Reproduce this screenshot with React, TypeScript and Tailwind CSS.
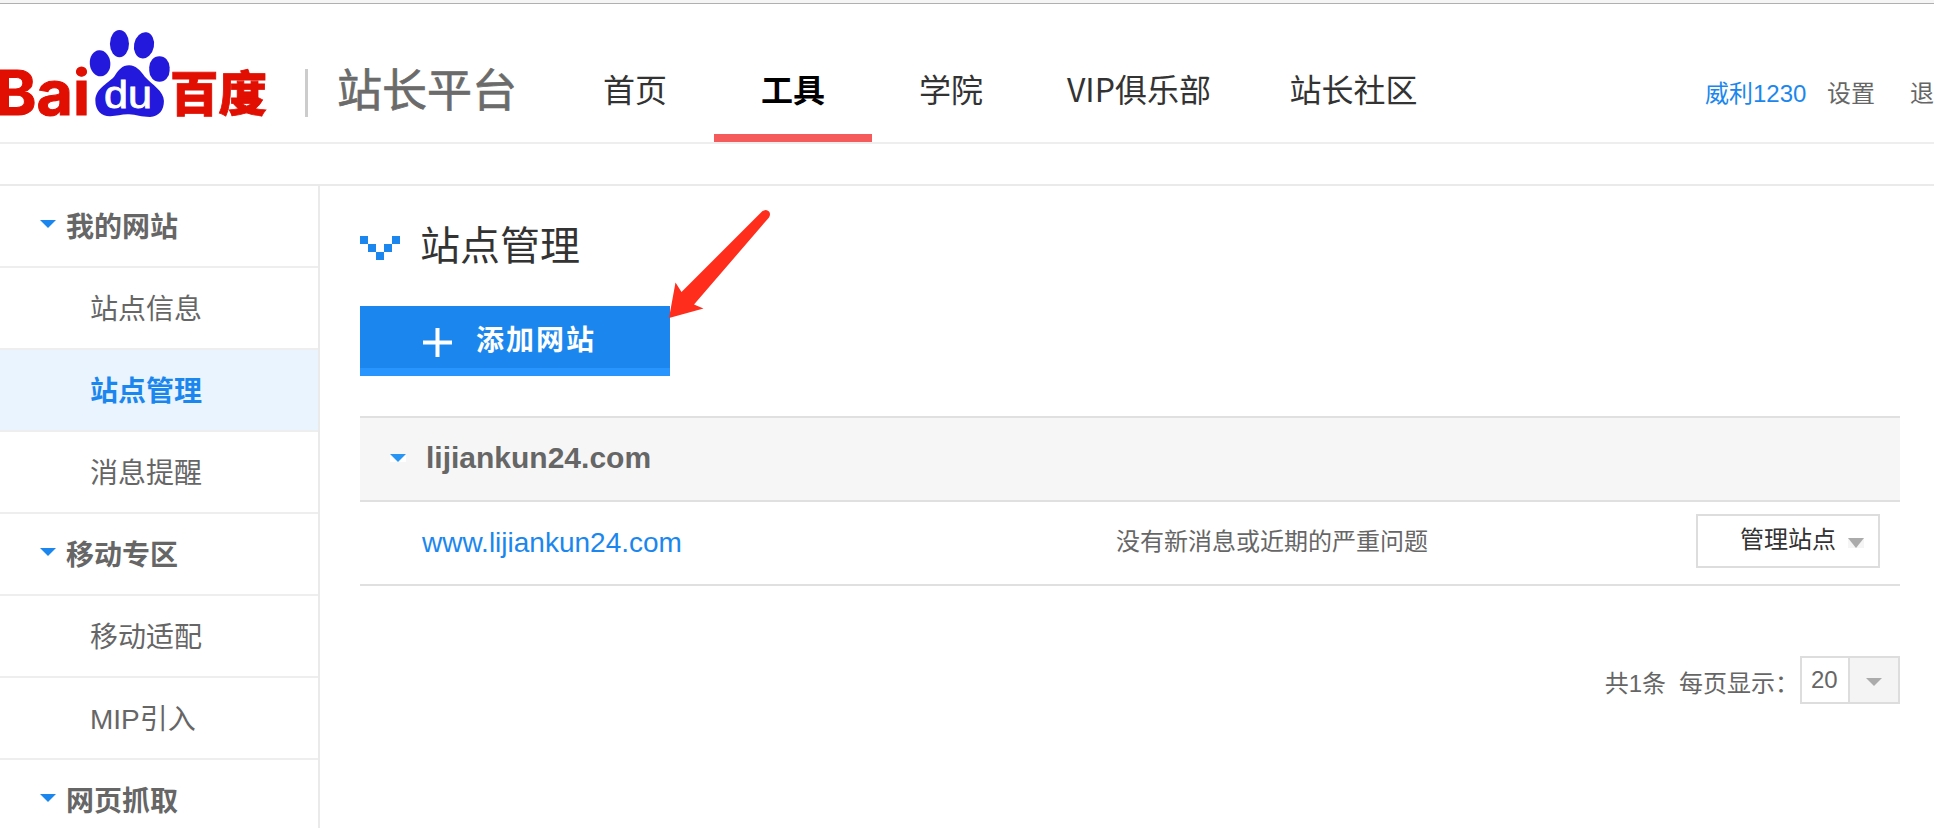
import React from "react";
import clsx from "clsx";

const Caret = ({ className, w = 16, h = 8 }: { className?: string; w?: number; h?: number }) => (
  <svg width={w} height={h} viewBox={`0 0 ${w} ${h}`} className={clsx("shrink-0", className)}>
    <path d={`M0 0H${w}L${w / 2} ${h}Z`} fill="currentColor" />
  </svg>
);

const Logo = () => (
  <svg width="280" height="138" viewBox="0 4 280 138" className="shrink-0">
    <g fill="#e10e02">
      <text x="-5" y="114.500" fontSize="62" fontFamily="Inter, 'Liberation Sans', sans-serif" fontWeight="700" textLength="95" lengthAdjust="spacingAndGlyphs" stroke="#e10e02" strokeWidth="1">
        Bai
      </text>
      <text x="170" y="110.500" fontSize="48" fontWeight="900" fontFamily="'Noto Sans CJK SC', sans-serif" textLength="97" lengthAdjust="spacingAndGlyphs" stroke="#e10e02" strokeWidth="0.8">
        百度
      </text>
    </g>
    <g fill="#2319dc" transform="scale(1.0714 1)">
      <ellipse cx="93.4" cy="63.3" rx="9.6" ry="13" transform="rotate(-4 93.4 63.3)" />
      <ellipse cx="111.5" cy="43.7" rx="8.9" ry="13.6" />
      <ellipse cx="134.4" cy="45.3" rx="9.3" ry="13.2" transform="rotate(10 134.4 45.3)" />
      <rect x="139.3" y="56.2" width="19" height="25.6" rx="9.4" ry="11" />
      <path d="M120.5 65.2C114 65.2 110.500 70 107 76C102.500 82.500 89 88 89 100.500C89 111 95 116.500 103 116.300C109 116 114 114 120.500 114.300C127 114.500 132 117 140 117C148.500 116.500 153 110 153 101C153 91 142 85 135 76.500C131 70.500 127 65.200 120.500 65.200Z" />
    </g>
    <text x="104" y="108" fontSize="38" fill="#fff" stroke="#fff" strokeWidth="0.8" fontFamily="'Liberation Sans', sans-serif" textLength="48" lengthAdjust="spacingAndGlyphs">
      du
    </text>
  </svg>
);

const tabs = [
  { label: "首页", cls: "w-[158px]" },
  { label: "工具", cls: "w-[158px]", active: true },
  { label: "学院", cls: "w-[158px]" },
  { label: "VIP俱乐部", cls: "w-[218px]" },
  { label: "站长社区", cls: "w-[211px]" },
];

const menu = [
  { label: "我的网站", head: true },
  { label: "站点信息" },
  { label: "站点管理", active: true },
  { label: "消息提醒" },
  { label: "移动专区", head: true },
  { label: "移动适配" },
  { label: "MIP引入" },
  { label: "网页抓取", head: true },
];

const Header = () => (
  <header className="flex h-[140px] shrink-0 border-b-2 border-[#eee]">
    <Logo />
    <div className="mt-[65px] ml-[25px] h-12 w-[3px] shrink-0 bg-[#ccc]" />
    <div className="mt-[57px] ml-[29px] w-[219px] shrink-0 text-[45px] leading-[62px] whitespace-nowrap text-[#6b6b6b] [-webkit-text-stroke:0.7px_#6b6b6b]">站长平台</div>
    <nav className="flex shrink-0">
      {tabs.map((t) => (
        <a
          key={t.label}
          className={clsx(
            "flex justify-center border-b-8 pt-[60px] font-['Noto_Sans_CJK_SC',sans-serif] text-[32px] leading-[48px] whitespace-nowrap",
            t.cls,
            t.active ? "border-[#f55b5b] font-bold text-black" : "border-transparent text-[#333]",
          )}
        >
          {t.label}
        </a>
      ))}
    </nav>
    <div className="mt-[72px] ml-auto flex w-[229px] shrink-0 text-2xl leading-9 whitespace-nowrap text-[#666]">
      <span className="w-[122px] text-[#1b87ee]">威利1230</span>
      <span className="w-[83px]">设置</span>
      <span className="w-6 overflow-hidden">退出</span>
    </div>
  </header>
);

const Sidebar = () => (
  <aside className="w-80 shrink-0 border-r-2 border-[#eaeaea]">
    {menu.map((m) => (
      <div
        key={m.label}
        className={clsx(
          "flex h-[82px] items-center border-b-2 border-[#eee] text-[28px]",
          m.head ? "pl-10 font-bold" : "pl-[90px]",
          m.active ? "bg-[#e9f4fe] font-bold text-[#1b87ee]" : "text-[#666]",
        )}
      >
        {m.head && <Caret className="mr-[10px] mb-1 text-[#1b87ee]" />}
        <span className="mt-[3px]">{m.label}</span>
      </div>
    ))}
  </aside>
);

const Main = () => (
  <main className="relative w-[1580px] shrink-0 pl-10">
    <div className="flex h-[120px] items-center">
      <svg width="40" height="24" viewBox="0 0 40 24" className="mt-1 shrink-0" fill="#1b87ee">
        <path d="M0 0h8v8H0zM8 8h8v8H8zM16 16h8v8h-8zM24 8h8v8h-8zM32 0h8v8h-8z" />
      </svg>
      <h1 className="ml-5 text-[40px] text-[#333]">站点管理</h1>
    </div>
    <button className="flex h-[70px] w-[310px] items-center border-b-8 border-[#2894fd] bg-[#1b87ee] pl-[63px] text-white">
      <svg width="29" height="29" viewBox="0 0 29 29" className="mt-2.5 shrink-0">
        <path d="M14.500 0v29M0 14.500h29" stroke="currentColor" strokeWidth="4" />
      </svg>
      <span className="mt-2 ml-6 text-[28px] leading-10 font-bold tracking-[2px]">添加网站</span>
    </button>
    <svg width="104" height="112" viewBox="668 208 104 112" className="absolute top-[22px] left-[348px]">
      <path d="M669 318L675.500 282.500L681.500 292L762 211.500Q766 208.500 769 211.500Q771 214 769 217.500L694 304.500L703.500 308.500Z" fill="#ff2d1c" />
    </svg>
    <section className="mt-10">
      <div className="flex h-[86px] items-center border-y-2 border-[#e0e0e0] bg-[#f6f6f6] pl-[30px]">
        <span className="mr-5 mb-0.5 flex bg-white">
          <Caret className="text-[#2894f4]" />
        </span>
        <h2 className="mb-[3px] text-[30px] font-bold text-[#666]">lijiankun24.com</h2>
      </div>
      <div className="flex h-[84px] items-center border-b-2 border-[#e0e0e0]">
        <a className="w-[756px] pl-[62px] text-[28px] text-[#1b87ee]">www.lijiankun24.com</a>
        <span className="mb-0.5 text-2xl text-[#666]">没有新消息或近期的严重问题</span>
        <button className="mr-5 mb-1 ml-auto flex h-[54px] w-[184px] items-center border-2 border-[#ddd] pl-[42px] text-2xl text-[#333]">
          <span className="mb-0.5">管理站点</span>
          <span className="mt-1 ml-3 flex bg-[#f5f5f5]">
            <Caret h={10} className="text-[#ababab]" />
          </span>
        </button>
      </div>
    </section>
    <div className="mt-[70px] flex h-12 items-center justify-end text-2xl text-[#666]">
      <span className="mt-2">共1条</span>
      <span className="mt-2 ml-[13px] w-[121px] whitespace-nowrap">每页显示：</span>
      <div className="flex h-12 w-[100px] border-2 border-[#ddd]">
        <span className="w-12 border-r-2 border-[#ddd] pl-[9px] leading-[44px]">20</span>
        <span className="flex flex-1 items-center justify-center bg-[#f4f4f4]">
          <Caret className="mt-1 text-[#ababab]" />
        </span>
      </div>
    </div>
  </main>
);

export default function App() {
  return (
    <div className="flex h-[828px] w-[1934px] flex-col overflow-hidden bg-white font-['Liberation_Sans','Noto_Sans_CJK_SC',sans-serif]">
      <div className="h-1 shrink-0 border-b border-[#b0b0b0] bg-[#f5f5f5]" />
      <Header />
      <div className="mt-10 flex border-t-2 border-[#eaeaea]">
        <Sidebar />
        <Main />
      </div>
    </div>
  );
}
